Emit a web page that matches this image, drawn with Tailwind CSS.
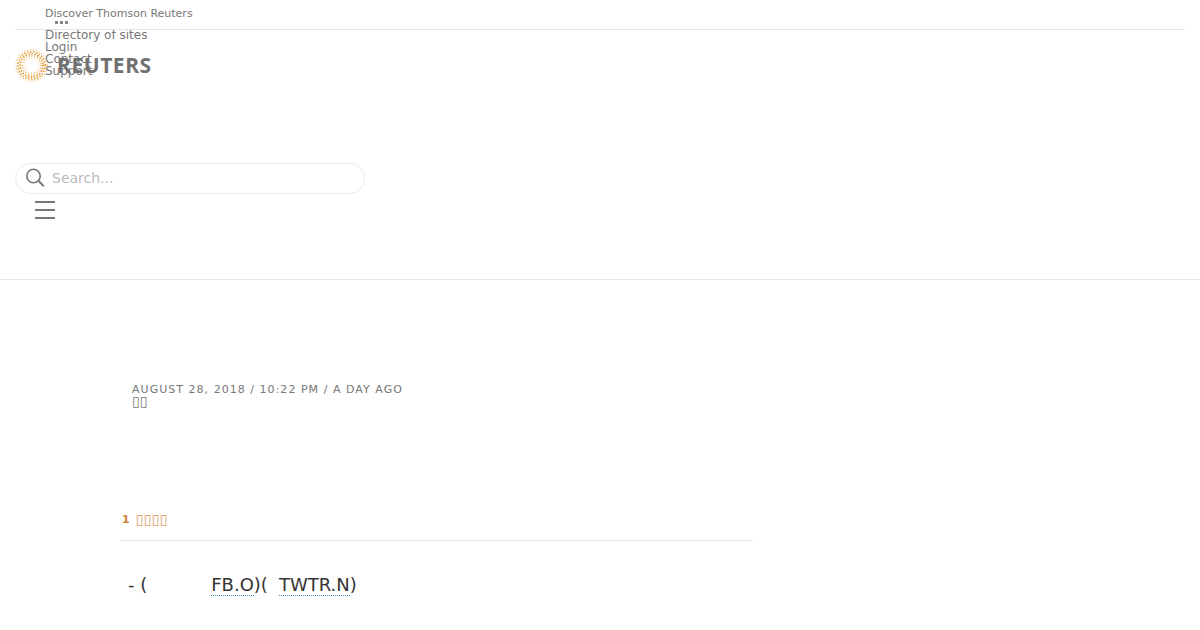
<!DOCTYPE html>
<html lang="zh">
<head>
  <meta charset="UTF-8" />
  <title>Reuters</title>
  <script src="https://cdn.jsdelivr.net/npm/@tailwindcss/browser@4"></script>
</head>
<body class="bg-white h-[630px] overflow-hidden font-['DejaVu_Sans',sans-serif] text-[#666]">
  <header class="relative h-[280px] border-b border-[#e6e6e6]">
    <!-- top strip -->
    <div class="mx-[15px] h-[30px] border-b border-[#e3e3e3] pl-[30px] pt-[7px] relative">
      <a class="block text-[11px] leading-[13px] text-[#777]">Discover Thomson Reuters</a>
      <div class="absolute left-[40px] top-[21px] flex gap-[2px]">
        <span class="w-[3px] h-[3px] bg-[#888]"></span>
        <span class="w-[3px] h-[3px] bg-[#888]"></span>
        <span class="w-[3px] h-[3px] bg-[#888]"></span>
      </div>
    </div>
    <ul class="pl-[45px] -mt-px text-xs leading-[12px] text-[#777]">
      <li>Directory of sites</li>
      <li>Login</li>
      <li>Contact</li>
      <li>Support</li>
    </ul>

    <!-- logo sits over the list -->
    <div class="absolute left-[15px] top-[49px] flex items-center gap-[9px]">
      <svg width="33" height="33" viewBox="0 0 33 33" fill="none" stroke-linecap="round">
        <circle cx="16.5" cy="16.5" r="15.6" stroke="#f0c078" stroke-width="1.4" stroke-dasharray="0 3" />
        <circle cx="16.5" cy="16.5" r="13.6" stroke="#e6a348" stroke-width="1.9" stroke-dasharray="0 3" />
        <circle cx="16.5" cy="16.5" r="11.4" stroke="#e39a35" stroke-width="1.9" stroke-dasharray="0 3" />
        <circle cx="16.5" cy="16.5" r="9.2" stroke="#ecb25f" stroke-width="1.5" stroke-dasharray="0 2.9" />
        <circle cx="16.5" cy="16.5" r="7.2" stroke="#f3cd92" stroke-width="1.1" stroke-dasharray="0 2.8" />
      </svg>
      <span class="text-[21px] leading-[33px] font-bold tracking-[0.55px] font-['Open_Sans',sans-serif] text-[#707070]">REUTERS</span>
    </div>

    <!-- search -->
    <div class="absolute left-[15px] top-[163px] w-[350px] h-[31px] border border-[#ebebeb] rounded-full flex items-center pl-[9px] gap-[7px]">
      <svg class="-mt-[2px]" width="20" height="20" viewBox="0 0 20 20" fill="none" stroke="#777" stroke-width="1.6">
        <circle cx="8.5" cy="8" r="6.7" />
        <path d="M13.5 12.8 L18.8 18.4" stroke-width="2" />
      </svg>
      <span class="text-sm -mt-[2px] text-[#bbb]">Search...</span>
    </div>
    <div class="absolute left-[35px] top-[201px] w-[20px] flex flex-col gap-[6px]">
      <span class="block h-[2px] bg-[#777]"></span>
      <span class="block h-[2px] bg-[#777]"></span>
      <span class="block h-[2px] bg-[#777]"></span>
    </div>
  </header>

  <main class="pl-[121px] w-[753px]">
    <div class="pl-[11px] pt-[104px] text-[11px] leading-[12px] text-[#777]">
      <p class="tracking-[1.03px]">AUGUST 28, 2018 / 10:22 PM / A DAY AGO</p>
      <p class="text-[14px] leading-[10px]">▯▯</p>
    </div>
    <div class="mt-[107px] h-[28px] border-b border-[#e6e6e6] flex items-start text-[11px] leading-[13px] text-[#d9813a]">
      <span class="font-bold ml-px">1</span>
      <span class="ml-[6px] text-[14px] tracking-[0.3px] text-[#dc9a66]">▯▯▯▯</span>
    </div>
    <p class="pl-[7px] pt-[32px] text-lg leading-[24px] text-[#333]">- (<span class="inline-block w-[64px]"></span><a class="border-b border-dotted border-[#3d93a3]">FB.O</a>)(<span class="inline-block w-[11px]"></span><a class="border-b border-dotted border-[#3d93a3]">TWTR.N</a>)</p>
  </main>
</body>
</html>
